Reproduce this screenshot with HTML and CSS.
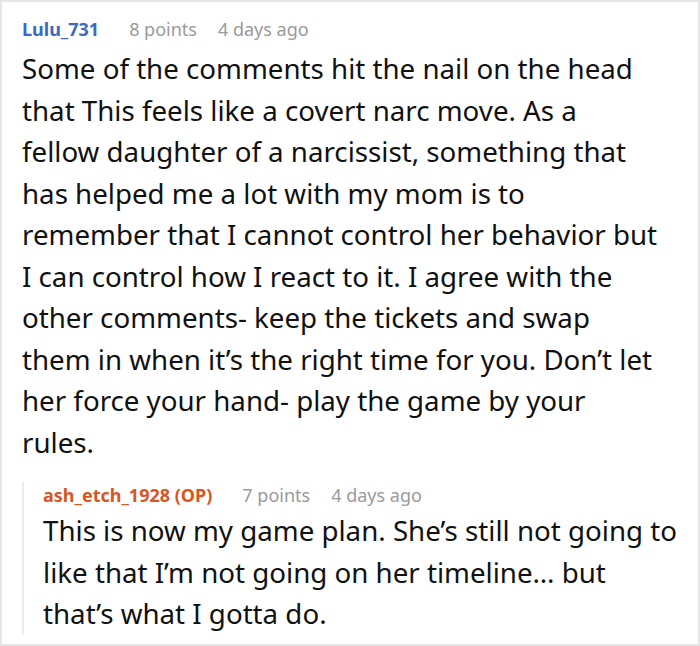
FILE: index.html
```html
<!DOCTYPE html>
<html>
<head>
<meta charset="utf-8">
<link rel="stylesheet" href="styles.css">
</head>
<body>
<div class="frame">
  <div class="comment">
    <div class="meta">
      <span class="user">Lulu_731</span>
      <span class="info">8 points</span>
      <span class="info">4 days ago</span>
    </div>
    <p class="text main-text">Some of the comments hit the nail on the head that This feels like a covert narc move. As a fellow daughter of a narcissist, something that has helped me a lot with my mom is to remember that I cannot control her behavior but I can control how I react to it. I agree with the other comments- keep the tickets and swap them in when it’s the right time for you. Don’t let her force your hand- play the game by your rules.</p>
    <div class="reply">
      <div class="meta">
        <span class="user op">ash_etch_1928 (OP)</span>
        <span class="info">7 points</span>
        <span class="info">4 days ago</span>
      </div>
      <p class="text reply-text">This is now my game plan. She’s still not going to like that I’m not going on her timeline… but that’s what I gotta do.</p>
    </div>
  </div>
</div>
</body>
</html>
```

FILE: styles.css
```css
html, body {
  margin: 0;
  padding: 0;
  background: #fff;
}
.frame {
  width: 700px;
  height: 646px;
  box-sizing: border-box;
  border: 2px solid #e6e6e6;
  font-family: "Noto Sans", "Open Sans", sans-serif;
  color: #111;
  overflow: hidden;
}
.comment {
  padding: 14px 20px 0 20px;
}
.meta {
  display: flex;
  gap: 21px;
  font-size: 18px;
  line-height: 26px;
}
.user {
  font-weight: 700;
  color: #3a6bbd;
  margin-right: 9px;
}
.user.op {
  color: #d9561e;
}
.info {
  color: #9a9a9a;
}
.text {
  margin: 6px 0 0 0;
  font-size: 27.7px;
  line-height: 41.5px;
}
.main-text {
  max-width: 636px;
}
.reply {
  margin-top: 27px;
  border-left: 2px solid #ececec;
  padding-left: 19px;
}
.reply .meta {
  margin-top: -8px;
}
.reply-text {
  margin-top: 2px;
  margin-bottom: -6px;
}
```
